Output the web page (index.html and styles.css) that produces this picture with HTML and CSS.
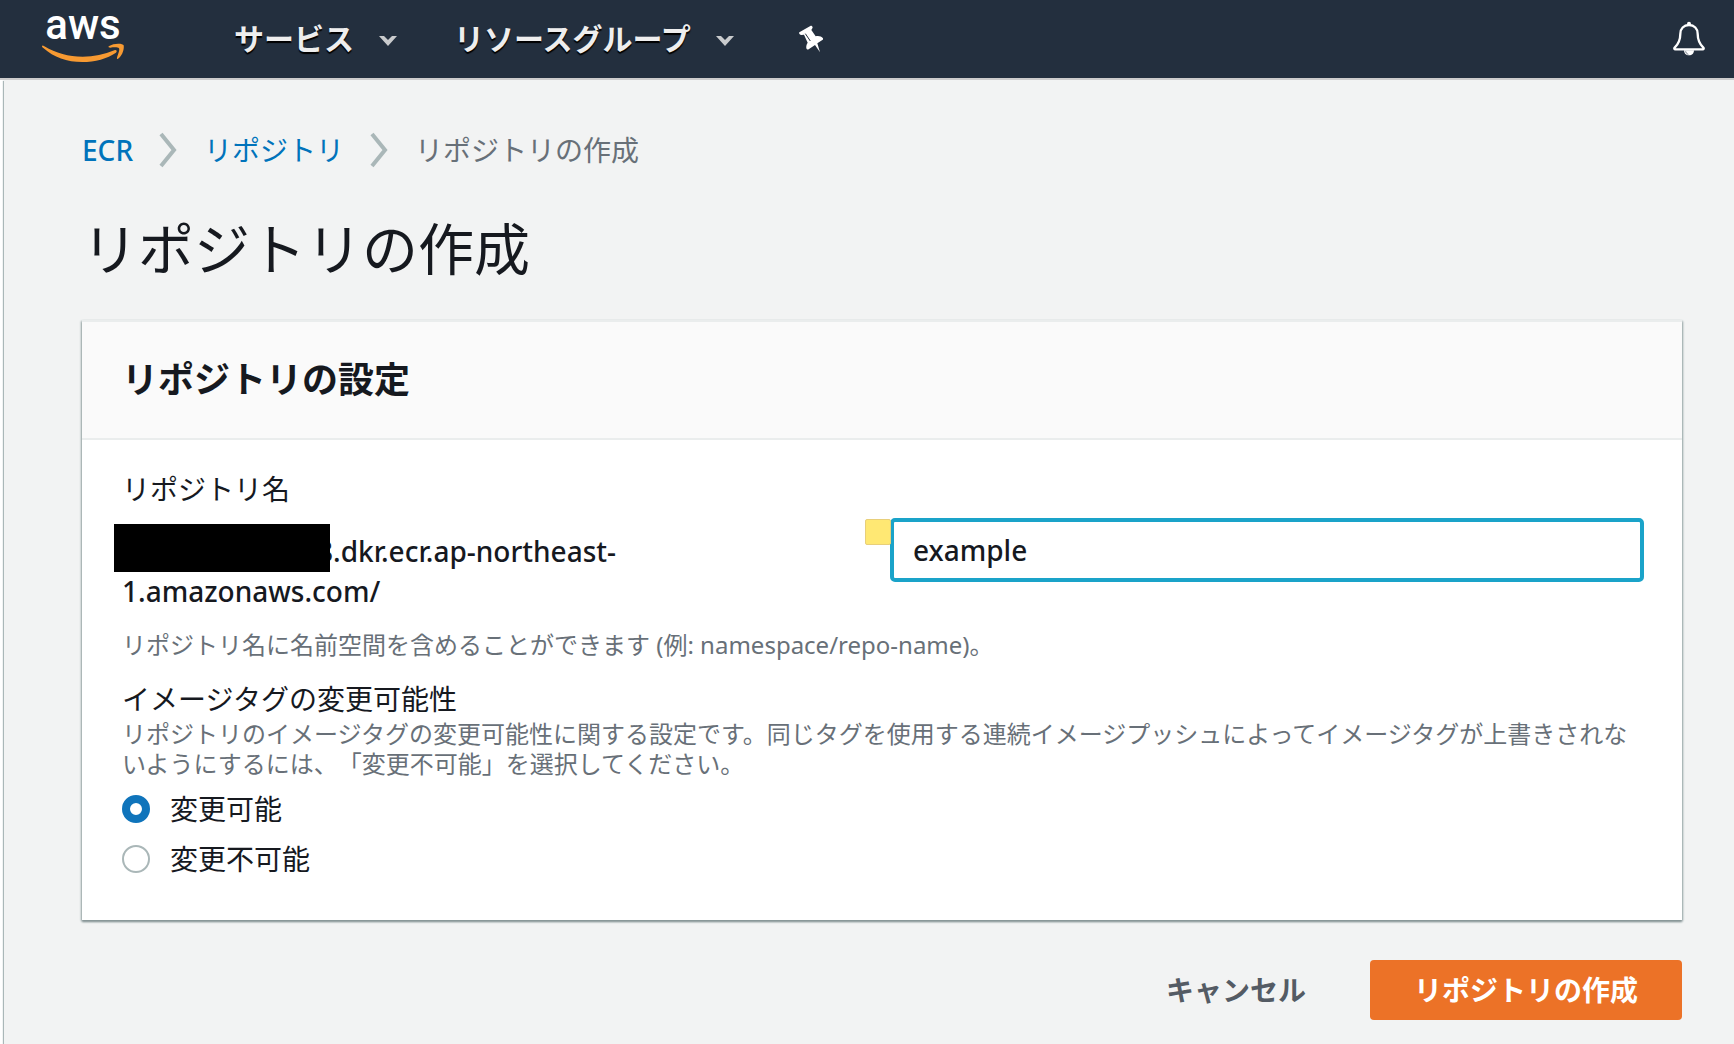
FILE: index.html
```html
<!DOCTYPE html>
<html lang="ja">
<head>
<meta charset="utf-8">
<meta name="viewport" content="width=device-width, initial-scale=1">
<title>リポジトリの作成</title>
<link rel="stylesheet" href="styles.css">
</head>
<body>
<header class="topbar">
  <a class="logo" href="#" aria-label="aws">
    <svg width="90" height="78" viewBox="38 0 90 78">
      <text class="logo-text" x="83" y="39" text-anchor="middle">aws</text>
      <g transform="scale(.33333)" fill="#f79a32">
        <path d="M127 137c-3 2 0 4 3 7 32 28 70 42 117 42 38 0 75-10 101-28 5-4 1-10-5-7-30 13-61 19-95 19-43 0-80-10-115-31-3-2-5-3-6-2z"/>
        <path d="M326 139c-2 3 1 4 5 4 9-1 23-2 26 2 3 5-3 18-6 28-1 4 2 5 5 2 12-10 17-28 15-39-2-6-29-8-45 3z"/>
      </g>
    </svg>
  </a>
  <nav class="menu">
    <button class="menu-item" type="button">サービス
      <svg class="caret" width="18" height="10" viewBox="0 0 18 10"><path d="M0 0h5l4 4 4-4h5L9 10z" fill="#c9cbcd"/></svg>
    </button>
    <button class="menu-item" type="button">リソースグループ
      <svg class="caret" width="18" height="10" viewBox="0 0 18 10"><path d="M0 0h5l4 4 4-4h5L9 10z" fill="#c9cbcd"/></svg>
    </button>
    <button class="icon-button" type="button" aria-label="ピン留め">
      <svg width="24" height="28" viewBox="0 0 72 84">
        <path d="M1 22 34 3c3-2 9 2 6 7l-3 5 13 19c9-2 17 0 22 6 1 2 0 4-2 5L55 55l8 27-15-22-19 13c-3 2-6 0-7-3-1-7 1-13 4-17L15 29l-8 1c-5 0-8-5-6-8z" fill="#fff"/>
        <path d="m19 26 15 22" stroke="#232f3e" stroke-width="3"/>
      </svg>
    </button>
  </nav>
  <button class="icon-button" type="button" aria-label="通知">
    <svg width="32" height="36" viewBox="0 0 96 108" fill="none" stroke="#fff">
      <path d="M7 85c-3 0-4-3-2-5C17 68 22 56 22 38c0-15 10-26 26-26s26 11 26 26c0 18 5 30 17 42 2 2 1 5-2 5z" stroke-width="7"/>
      <circle cx="48" cy="8" r="6" fill="#fff" stroke="none"/>
      <path d="M33 88h30c0 9-6 15-15 15s-15-6-15-15z" fill="#fff" stroke="none"/>
      <path d="M38 91c1 5 4 8 8 9" stroke="#232f3e" stroke-width="2"/>
    </svg>
  </button>
</header>
<main class="page">
  <nav aria-label="パンくず">
    <ol class="breadcrumb">
      <li><a class="latin" href="#">ECR</a></li>
      <li><svg width="18" height="36" viewBox="0 0 18 36"><path d="m2 2 13 16L2 34" fill="none" stroke="#aab7b8" stroke-width="4"/></svg><a href="#">リポジトリ</a></li>
      <li><svg width="18" height="36" viewBox="0 0 18 36"><path d="m2 2 13 16L2 34" fill="none" stroke="#aab7b8" stroke-width="4"/></svg><span aria-current="page">リポジトリの作成</span></li>
    </ol>
  </nav>
  <h1>リポジトリの作成</h1>
  <form>
    <section class="card">
      <h2>リポジトリの設定</h2>
      <div class="card-body">
        <label class="label" for="repo">リポジトリ名</label>
        <div class="name-row">
          <div class="prefix latin"><span class="redacted"></span>8.dkr.ecr.ap-northeast-<wbr>1.amazonaws.com/</div>
          <div class="field">
            <span class="marker"></span>
            <input class="latin" id="repo" type="text" value="example">
          </div>
        </div>
        <p class="hint">リポジトリ名に名前空間を含めることができます (例: namespace/repo-name)。</p>
        <fieldset>
          <legend class="label">イメージタグの変更可能性</legend>
          <p class="description">リポジトリのイメージタグの変更可能性に関する設定です。同じタグを使用する連続イメージプッシュによってイメージタグが上書きされないようにするには、「変更不可能」を選択してください。</p>
          <label class="option"><input type="radio" name="mutability" checked>変更可能</label>
          <label class="option"><input type="radio" name="mutability">変更不可能</label>
        </fieldset>
      </div>
    </section>
    <div class="actions">
      <button class="cancel" type="button">キャンセル</button>
      <button class="submit" type="button">リポジトリの作成</button>
    </div>
  </form>
</main>
</body>
</html>
```
FILE: styles.css
```css
* {
  box-sizing: border-box;
}

body {
  margin: 0;
  min-height: 100vh;
  display: flex;
  flex-direction: column;
  background: #fff;
  color: #16191f;
  font: 28px/40px "Noto Sans", "Noto Sans CJK JP", sans-serif;
  text-spacing-trim: space-all;
}

button,
input {
  font: inherit;
  color: inherit;
}

button {
  padding: 0;
  border: 0;
  background: none;
  cursor: pointer;
}

svg {
  display: block;
  flex: none;
}

.latin {
  font-weight: 500;
}

/* Top bar */

.topbar {
  display: flex;
  align-items: center;
  height: 80px;
  padding: 0 29px 0 38px;
  background: #232f3e;
  border-bottom: 2px solid #ccc;
}

.logo {
  margin-right: 106px;
}

.logo-text {
  fill: #fff;
  font-family: Roboto, sans-serif;
  font-size: 42px;
  font-weight: 500;
}

.menu {
  display: flex;
  align-items: center;
  flex: 1;
  gap: 57px;
}

.menu-item {
  display: flex;
  align-items: center;
  gap: 25px;
  padding-bottom: 4px;
  color: #eee;
  font-family: "Noto Sans CJK JP", sans-serif;
  font-size: 30px;
  font-weight: 700;
  text-shadow: 0 2px 1px #000;
}

.caret {
  margin-top: 8px;
}

.menu .icon-button {
  margin-left: 8px;
}

/* Page */

.page {
  flex: 1;
  margin-left: 4px;
  padding: 50px 52px 24px 78px;
  background: #f2f3f3;
  box-shadow: -1px 1px 1px #aab7b8;
}

.breadcrumb {
  display: flex;
  gap: 26px;
  margin: 0;
  padding: 0;
  list-style: none;
  color: #687078;
}

.breadcrumb li {
  display: flex;
  align-items: center;
  gap: 27px;
}

.breadcrumb a {
  color: #0073bb;
  text-decoration: none;
}

h1 {
  margin: 42px 0 36px;
  font-size: 56px;
  font-weight: 400;
  line-height: 72px;
}

h2 {
  margin: 0;
  padding: 36px 40px;
  border-bottom: 2px solid #eaeded;
  background: #fafafa;
  font-size: 36px;
  line-height: 44px;
}

.card {
  background: #fff;
  border-top: 2px solid #eaeded;
  box-shadow: 0 2px 2px #879596, 1px 1px 2px #aab7b8, -1px 1px 2px #aab7b8;
}

.card-body {
  padding: 29px 38px 31px 40px;
}

.label {
  display: block;
  padding: 0;
}

.name-row {
  display: grid;
  grid-template-columns: 1fr 1fr;
  gap: 14px;
  margin-top: 9px;
}

.prefix {
  padding: 13px 40px 0 0;
}

.redacted {
  display: inline-block;
  position: relative;
  width: 216px;
  height: 48px;
  margin: -12px -13px -10px -8px;
  background: #000;
}

.field {
  position: relative;
}

.field input {
  display: block;
  width: 100%;
  height: 64px;
  padding: 0 19px;
  border: 4px solid #1aa3c9;
  border-radius: 5px;
  background: #fff;
  outline: 0;
}

.marker {
  position: absolute;
  top: 1px;
  left: -25px;
  width: 26px;
  height: 26px;
  border: 1px solid #e8cf7a;
  border-radius: 2px;
  background: #ffe873;
}

.hint {
  margin: 18px 0;
  color: #687078;
  font-size: 24px;
  line-height: 32px;
}

fieldset {
  min-width: 0;
  margin: 0;
  padding: 0;
  border: 0;
}

.description {
  margin: 0 0 10px;
  color: #687078;
  font-size: 24px;
  line-height: 30px;
}

.option {
  display: flex;
  align-items: center;
  gap: 20px;
  margin-bottom: 10px;
}

.option input {
  appearance: none;
  width: 28px;
  height: 28px;
  margin: 0;
  border: 2px solid #aab7b8;
  border-radius: 50%;
  background: #fff;
}

.option input:checked {
  border: 8px solid #0f74bb;
}

.actions {
  display: flex;
  justify-content: flex-end;
  gap: 64px;
  margin-top: 40px;
  font-weight: 700;
}

.cancel {
  color: #545b64;
}

.submit {
  height: 60px;
  padding: 0 44px;
  border-radius: 4px;
  background: #ec7227;
  color: #fff;
}
```
